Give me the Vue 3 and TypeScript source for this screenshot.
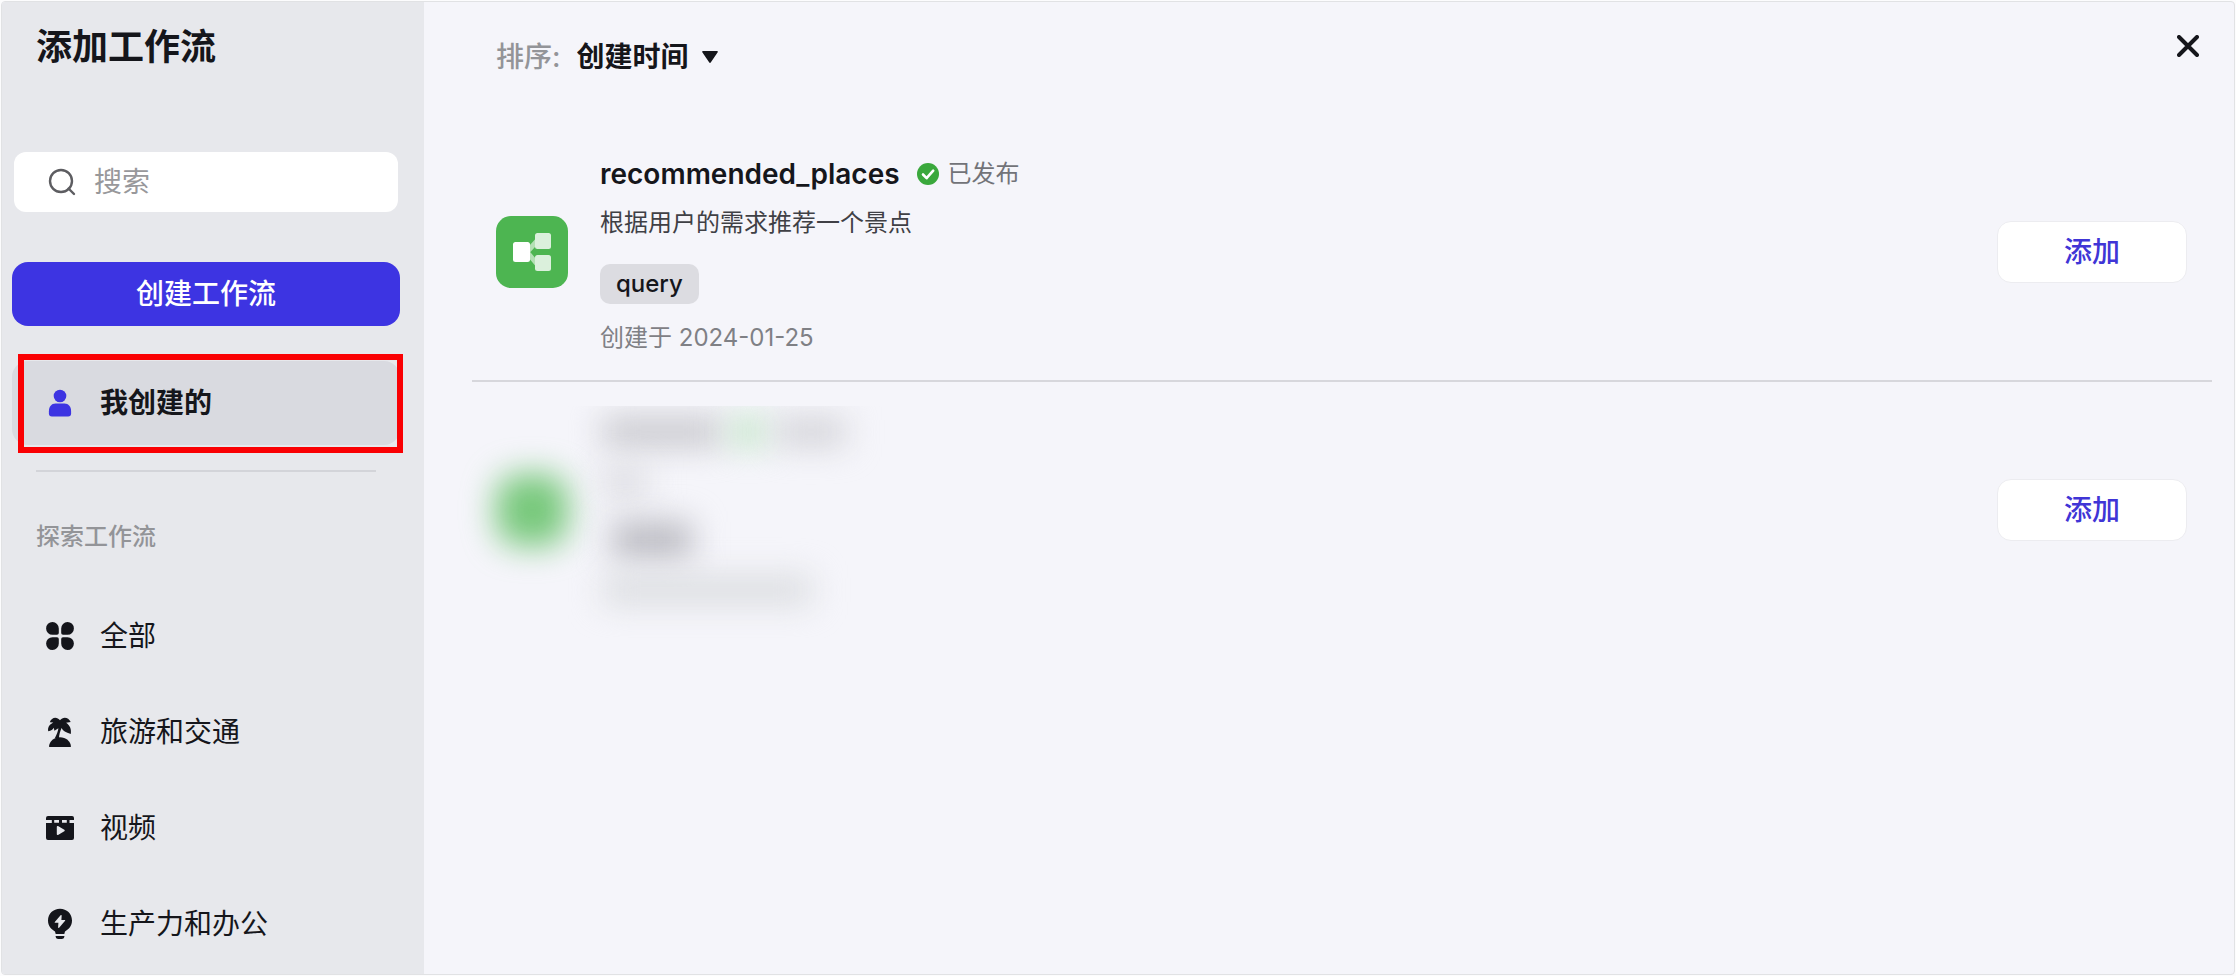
<script setup lang="ts">
import { ref } from 'vue'

interface Category {
  id: string
  label: string
}

interface Workflow {
  name: string
  status: string
  description: string
  params: string[]
  createdAt: string
}

const categories: Category[] = [
  { id: 'all', label: '全部' },
  { id: 'travel', label: '旅游和交通' },
  { id: 'video', label: '视频' },
  { id: 'productivity', label: '生产力和办公' },
]

const workflows: Workflow[] = [
  {
    name: 'recommended_places',
    status: '已发布',
    description: '根据用户的需求推荐一个景点',
    params: ['query'],
    createdAt: '2024-01-25',
  },
]

const keyword = ref('')
const sortBy = ref('created')
</script>

<template>
  <div class="frame">
    <div class="dialog">
      <aside class="sidebar">
        <h1 class="title">添加工作流</h1>

        <label class="search">
          <svg class="search-icon" viewBox="0 0 28 28" aria-hidden="true">
            <circle cx="13" cy="13" r="11" />
            <path d="M20.5 20.5 26 26" />
          </svg>
          <input v-model="keyword" type="text" placeholder="搜索" aria-label="搜索" />
        </label>

        <button class="create" type="button">创建工作流</button>

        <div class="mine">
          <button class="nav-item active" type="button">
            <svg class="nav-icon" viewBox="0 0 28 28" aria-hidden="true">
              <circle cx="14" cy="7" r="6.3" />
              <path d="M9.5 14.6h9c4 0 6.6 3.3 6.6 7.600v2.200a3 3 0 0 1-3 3H5.900a3 3 0 0 1-3-3v-2.200c0-4.300 2.600-7.600 6.600-7.600z" />
            </svg>
            <span>我创建的</span>
          </button>
          <span class="highlight"></span>
        </div>

        <hr class="side-rule" />
        <h2 class="section">探索工作流</h2>

        <nav class="nav">
          <button v-for="item in categories" :key="item.id" class="nav-item" type="button">
            <svg class="nav-icon" viewBox="0 0 28 28" aria-hidden="true">
              <g v-if="item.id === 'all'">
                <path d="M6.500 0A6.400 6.400 0 0 1 12.800 6.500V11a1.800 1.800 0 0 1-1.800 1.800H6.500A6.400 6.400 0 0 1 6.500 0z" />
                <path d="M21.500 0A6.400 6.400 0 0 0 15.200 6.500V11a1.800 1.800 0 0 0 1.800 1.800h4.500A6.400 6.400 0 0 0 21.500 0z" />
                <path d="M6.500 28A6.400 6.400 0 0 0 12.800 21.500V17a1.800 1.800 0 0 0-1.800-1.800H6.500A6.400 6.400 0 0 0 6.500 28z" />
                <path d="M21.500 28A6.400 6.400 0 0 1 15.200 21.500V17a1.800 1.800 0 0 1 1.800-1.800h4.500A6.400 6.400 0 0 1 21.500 28z" />
              </g>
              <g v-else-if="item.id === 'travel'">
                <path d="M14 2.200C11-1.800 5.500-1 3.800 4.200l3.500.300C3 6.800 1.600 9.500 2.200 13.200c3-.500 4.600-1.700 5.600-3.400l.600 2.900 4-2.500C12 13 10.800 16.500 8.800 20.200h4.100c.200-3.300 1.200-7 2.700-10.200 1.200 2.700 4.200 4.600 9.200 6 .8-4.700-.8-8.600-4.700-11.200l4.600-.700C22.500-1.200 16.800-1.600 14 2.200z" />
                <path d="M3 28.600C3.500 22.800 8.200 19.200 14 19.200s10.500 3.600 11 9.400c0 .300-.3.400-.6.400H3.600c-.3 0-.6-.1-.6-.4z" />
              </g>
              <g v-else-if="item.id === 'video'">
                <path d="M2 2h24a2 2 0 0 1 2 2v2h-4.500v3H28v15a2 2 0 0 1-2 2H2a2 2 0 0 1-2-2V9h5.800V6H0V4a2 2 0 0 1 2-2z" />
                <path class="cut" d="M8.200 6h4.800v2.800H8.200zM16 6h4.800v2.800H16zM10.800 12.800v7.400c0 .7.600 1 1.200.7l6.300-3.700a.8.8 0 0 0 0-1.400L12 12.100c-.6-.3-1.200 0-1.200.7z" />
              </g>
              <g v-else>
                <path d="M14-1.200c6.800 0 12 5 12 11.700 0 5.500-3.200 8.700-7 11l-.7 2.600H9.700L9 21.500c-3.800-2.300-7-5.500-7-11C2 3.800 7.200-1.200 14-1.200zM9.600 26h8.800v.6a2.400 2.400 0 0 1-2.400 2.400h-4a2.400 2.400 0 0 1-2.400-2.400z" />
                <path class="cut" d="m14.600 5.200-5.800 6.700c-.3.400-.1.900.4.900h3.200l-.3 4.500c0 .6.600.8 1 .4l6-6.900c.3-.4.1-.9-.4-.9h-3.300l.3-4.300c0-.6-.7-.8-1.100-.4z" />
              </g>
            </svg>
            <span>{{ item.label }}</span>
          </button>
        </nav>
      </aside>

      <main class="main">
        <header class="toolbar">
          <label class="sort-label" for="sort">排序:</label>
          <span class="sort">
            <select id="sort" v-model="sortBy">
              <option value="created">创建时间</option>
            </select>
            <svg class="caret" viewBox="0 0 16 12" aria-hidden="true">
              <path d="M1 0h14a.8.8 0 0 1 .7 1.300L8.900 11.300a1.100 1.100 0 0 1-1.800 0L.3 1.300A.8.8 0 0 1 1 0z" />
            </svg>
          </span>
          <button class="close" type="button" aria-label="关闭">
            <svg viewBox="0 0 22 22" aria-hidden="true"><path d="m2 2 18 18M20 2 2 20" /></svg>
          </button>
        </header>

        <article v-for="flow in workflows" :key="flow.name" class="card">
          <svg class="flow-icon" viewBox="0 0 72 72" aria-hidden="true">
            <rect width="72" height="72" rx="15" fill="#4db551" />
            <path d="M31 36 41 25M31 36l10 12" stroke="#b4e0b5" stroke-width="5" />
            <rect x="39" y="17" width="16" height="16" rx="2.500" fill="#dbf0dc" />
            <rect x="39" y="39" width="16" height="16" rx="2.500" fill="#dbf0dc" />
            <rect x="17" y="26" width="17" height="20" rx="2.500" fill="#fff" />
          </svg>
          <div class="info">
            <div class="name-row">
              <h3 class="name">{{ flow.name }}</h3>
              <span class="status">
                <svg class="check" viewBox="0 0 22 22" aria-hidden="true">
                  <circle cx="11" cy="11" r="11" fill="#3aa83c" />
                  <path d="m6 11.500 3.600 3.700 6.600-7.500" />
                </svg>
                {{ flow.status }}
              </span>
            </div>
            <p class="desc">{{ flow.description }}</p>
            <div class="tags">
              <span v-for="param in flow.params" :key="param" class="tag">{{ param }}</span>
            </div>
            <p class="date">创建于 {{ flow.createdAt }}</p>
          </div>
          <button class="add" type="button">添加</button>
        </article>

        <article class="card last">
          <span class="flow-icon masked-icon"></span>
          <div class="masked" aria-hidden="true">
            <div class="smudges">
              <span class="smudge heading"></span>
              <span class="smudge badge"></span>
              <span class="smudge state"></span>
            </div>
            <span class="smudge line"></span>
            <span class="smudge chip"></span>
            <span class="smudge stamp"></span>
          </div>
          <button class="add" type="button">添加</button>
        </article>
      </main>
    </div>
  </div>
</template>

<style>
body {
  margin: 0;
  background: #fcfcfd;
}
</style>

<style scoped>
.frame {
  box-sizing: border-box;
  min-height: 100vh;
  padding: 1px;
  display: flex;
  font-family: Inter, "Noto Sans CJK SC", sans-serif;
  color: #15161b;
}

.frame * {
  box-sizing: border-box;
}

button,
input,
select {
  font: inherit;
  color: inherit;
  border: 0;
  padding: 0;
  margin: 0;
  background: none;
}

h1,
h2,
h3,
p {
  margin: 0;
}

.dialog {
  flex: 1;
  display: flex;
  border: 1px solid #e1e2e4;
  border-radius: 4px;
  background: #f5f5fa;
  overflow: hidden;
}

.sidebar {
  flex: none;
  width: 422px;
  padding: 21px 24px 8px 10px;
  background: #e7e8ec;
  display: flex;
  flex-direction: column;
}

.title {
  padding-left: 24px;
  font-size: 36px;
  line-height: 48px;
  font-weight: 600;
}

.search {
  margin: 81px 2px 0;
  height: 60px;
  padding: 0 34px;
  display: flex;
  align-items: center;
  gap: 18px;
  border-radius: 12px;
  background: #fff;
}

.search-icon {
  flex: none;
  width: 28px;
  height: 28px;
  fill: none;
  stroke: #5d5d61;
  stroke-width: 2.4;
  stroke-linecap: round;
}

.search input {
  flex: 1;
  min-width: 0;
  font-size: 28px;
  line-height: 40px;
  outline: none;
}

.search input::placeholder {
  color: #98989b;
  opacity: 1;
}

.create {
  margin-top: 50px;
  height: 64px;
  border-radius: 16px;
  background: #3d34e2;
  color: #fff;
  font-size: 28px;
  line-height: 40px;
  font-weight: 500;
}

.mine {
  position: relative;
  margin-top: 35px;
}

.highlight {
  position: absolute;
  inset: -7px -3px -8px 6px;
  border: 6px solid #fa0003;
  pointer-events: none;
}

.nav {
  margin-top: 41px;
  display: flex;
  flex-direction: column;
  gap: 12px;
}

.nav-item {
  width: 100%;
  height: 84px;
  padding: 0 34px;
  display: flex;
  align-items: center;
  gap: 26px;
  border-radius: 16px;
  font-size: 28px;
  line-height: 40px;
  text-align: left;
}

.nav-item.active {
  background: #d9dae0;
  font-weight: 600;
}

.nav-icon {
  flex: none;
  width: 28px;
  height: 28px;
  fill: #14151b;
  overflow: visible;
}

.active .nav-icon {
  fill: #3d34e2;
}

.nav-icon .cut {
  fill: #e7e8ec;
}

.side-rule {
  width: 340px;
  height: 2px;
  margin: 25px 24px 0;
  border: 0;
  background: #d3d4d9;
}

.section {
  margin-top: 49px;
  padding-left: 24px;
  font-size: 24px;
  line-height: 32px;
  font-weight: 500;
  color: #939498;
}

.main {
  flex: 1;
  min-width: 0;
  padding: 0 22px 0 48px;
}

.toolbar {
  height: 122px;
  padding: 33px 13px 0 24px;
  display: flex;
  align-items: flex-start;
  font-size: 28px;
  line-height: 44px;
  font-weight: 500;
}

.sort-label {
  color: #939498;
}

.sort {
  margin-left: 16px;
  display: flex;
  align-items: center;
  gap: 12px;
}

.sort select {
  appearance: none;
  height: 44px;
  outline: none;
  font-weight: 600;
}

.caret {
  width: 16px;
  height: 12px;
  fill: #15161b;
}

.close {
  margin-left: auto;
  height: 22px;
}

.close svg {
  display: block;
  width: 22px;
  height: 22px;
  fill: none;
  stroke: #15161b;
  stroke-width: 4;
  stroke-linecap: round;
}

.card {
  height: 258px;
  padding: 0 25px 0 24px;
  display: flex;
  align-items: center;
  border-bottom: 2px solid #d7d7dc;
}

.card.last {
  border-color: transparent;
}

.flow-icon {
  flex: none;
  width: 72px;
  height: 72px;
}

.info {
  flex: 1;
  min-width: 0;
  margin-left: 32px;
  padding-top: 4px;
}

.name-row {
  display: flex;
  align-items: center;
  gap: 17px;
}

.name {
  font-size: 28px;
  line-height: 40px;
  font-weight: 600;
}

.status {
  display: flex;
  align-items: center;
  gap: 9px;
  font-size: 24px;
  line-height: 32px;
  color: #727378;
}

.check {
  width: 22px;
  height: 22px;
  fill: none;
  stroke: #fff;
  stroke-width: 2.600;
  stroke-linecap: round;
  stroke-linejoin: round;
}

.check circle {
  stroke: none;
}

.desc {
  margin-top: 13px;
  font-size: 24px;
  line-height: 32px;
  color: #3f4045;
}

.tags {
  margin-top: 25px;
  display: flex;
  gap: 8px;
}

.tag {
  padding: 4px 16px;
  border-radius: 10px;
  background: #dcdce1;
  font-size: 24px;
  line-height: 32px;
  font-weight: 500;
}

.date {
  margin-top: 18px;
  font-size: 24px;
  line-height: 32px;
  color: #7f8085;
}

.add {
  flex: none;
  width: 190px;
  height: 62px;
  border: 1px solid #ececf0;
  border-radius: 14px;
  background: #fff;
  color: #4035d6;
  font-size: 28px;
  line-height: 40px;
  font-weight: 500;
}

.masked-icon {
  border-radius: 24px;
  background: #77c87b;
  filter: blur(16px);
}

.masked {
  flex: 1;
  min-width: 0;
  align-self: stretch;
  margin-top: 24px;
  padding: 12px 0 0 34px;
  display: flex;
  flex-direction: column;
  overflow: hidden;
}

.smudges {
  display: flex;
  gap: 10px;
}

.smudge {
  display: block;
  height: 28px;
  background: #c6c6cb;
  filter: blur(16px);
}

.heading {
  width: 120px;
}

.badge {
  width: 34px;
  background: #bfe6c3;
}

.state {
  width: 70px;
  background: #d2d2d7;
}

.line {
  width: 46px;
  margin-top: 22px;
  background: #dadadf;
}

.chip {
  width: 80px;
  height: 36px;
  margin: 26px 0 0 10px;
  background: #b9b9c0;
}

.stamp {
  width: 210px;
  margin-top: 18px;
  background: #dadcdf;
}
</style>
